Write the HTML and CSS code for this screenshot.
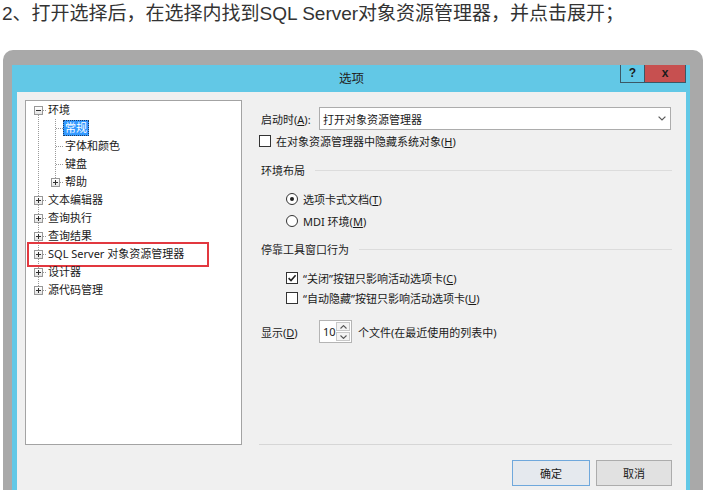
FILE: index.html
```html
<!DOCTYPE html>
<html lang="zh-CN">
<head>
    <meta charset="UTF-8">
    <meta name="viewport" content="width=device-width, initial-scale=1.0">
    <title>选项</title>
    <link rel="stylesheet" href="styles.css">
</head>
<body>

    <p class="step">2、打开选择后，在选择内找到SQL Server对象资源管理器，并点击展开；</p>

    <!-- 截图外框 -->
    <div class="shot">
        <div class="dialog">
            <div class="titlebar">
                <span></span>
                <span class="title">选项</span>
                <div class="caption-buttons">
                    <span class="cap-btn help">?</span>
                    <span class="cap-btn close">x</span>
                </div>
            </div>

            <div class="dialog-body">
                <div class="main">
                    <!-- 左侧树 -->
                    <div class="tree-box">
                        <ul class="tree">
                            <li>
                                <div class="row"><span class="twig"><i class="toggle"></i></span><span class="label">环境</span></div>
                                <ul class="children">
                                    <li><div class="row"><span class="twig"></span><span class="label selected">常规</span></div></li>
                                    <li><div class="row"><span class="twig"></span><span class="label">字体和颜色</span></div></li>
                                    <li><div class="row"><span class="twig"></span><span class="label">键盘</span></div></li>
                                    <li><div class="row"><span class="twig"><i class="toggle plus"></i></span><span class="label">帮助</span></div></li>
                                </ul>
                            </li>
                            <li><div class="row"><span class="twig"><i class="toggle plus"></i></span><span class="label">文本编辑器</span></div></li>
                            <li><div class="row"><span class="twig"><i class="toggle plus"></i></span><span class="label">查询执行</span></div></li>
                            <li><div class="row"><span class="twig"><i class="toggle plus"></i></span><span class="label">查询结果</span></div></li>
                            <li><div class="row marked"><span class="twig"><i class="toggle plus"></i></span><span class="label">SQL Server 对象资源管理器</span></div></li>
                            <li><div class="row"><span class="twig"><i class="toggle plus"></i></span><span class="label">设计器</span></div></li>
                            <li><div class="row"><span class="twig"><i class="toggle plus"></i></span><span class="label">源代码管理</span></div></li>
                        </ul>
                    </div>

                    <!-- 右侧设置页 -->
                    <div class="page">
                        <div class="field startup">
                            <span class="field-label">启动时(<u>A</u>):</span>
                            <div class="combo">
                                <span>打开对象资源管理器</span>
                                <svg width="8" height="5" viewBox="0 0 8 5"><path d="M0.6 0.6 L4 4 L7.4 0.6" fill="none" stroke="#5a5a5a" stroke-width="1.2"/></svg>
                            </div>
                        </div>

                        <label class="check first">
                            <span class="box"></span>在对象资源管理器中隐藏系统对象(<u>H</u>)
                        </label>

                        <div class="group-title g-layout">环境布局</div>
                        <label class="radio indent r1"><span class="dot on"></span>选项卡式文档(<u>T</u>)</label>
                        <label class="radio indent"><span class="dot"></span>MDI 环境(<u>M</u>)</label>

                        <div class="group-title g-dock">停靠工具窗口行为</div>
                        <label class="check indent c1">
                            <span class="box"><svg width="10" height="10" viewBox="0 0 10 10"><path d="M1.6 5.2 L4 7.5 L8.6 2.2" fill="none" stroke="#222" stroke-width="1.6"/></svg></span>“关闭”按钮只影响活动选项卡(<u>C</u>)
                        </label>
                        <label class="check indent">
                            <span class="box"></span>“自动隐藏”按钮只影响活动选项卡(<u>U</u>)
                        </label>

                        <div class="field recent">
                            <span class="field-label">显示(<u>D</u>)</span>
                            <div class="spin">
                                <span class="spin-value">10</span>
                                <div class="spin-arrows">
                                    <span><svg width="7" height="4" viewBox="0 0 7 4"><path d="M0.5 3.5 L3.5 0.6 L6.5 3.5" fill="none" stroke="#555" stroke-width="1.1"/></svg></span>
                                    <span><svg width="7" height="4" viewBox="0 0 7 4"><path d="M0.5 0.5 L3.5 3.4 L6.5 0.5" fill="none" stroke="#555" stroke-width="1.1"/></svg></span>
                                </div>
                            </div>
                            <span class="after">个文件(在最近使用的列表中)</span>
                        </div>
                    </div>
                </div>

                <div class="footer">
                    <button class="btn default">确定</button>
                    <button class="btn cancel">取消</button>
                </div>
            </div>
        </div>
    </div>

</body>
</html>
```

FILE: styles.css
```css
body {
    margin: 0;
    height: 490px;
    overflow: hidden;
    background: #fff;
    font-family: "Liberation Sans", "Noto Sans CJK SC", sans-serif;
}

.step {
    margin: 0;
    padding-left: 2px;
    font-size: 19px;
    line-height: 28px;
    color: #333;
}

/* 截图外框 */
.shot {
    margin: 22px 0 0 3px;
    width: 700px;
    box-sizing: border-box;
    padding: 15px 13px 0 9px;
    background: #a9a9a9;
    border-radius: 10px 10px 0 0;
}

.dialog {
    background: #62c8e6;
    padding: 0 4px 0 5px;
    font-family: "Noto Sans", "Noto Sans CJK SC", sans-serif;
    font-size: 11px;
    color: #1a1a1a;
}

/* 标题栏 */
.titlebar {
    height: 27px;
    display: grid;
    grid-template-columns: 1fr auto 1fr;
    align-items: start;
}
.title {
    font-size: 12.5px;
    line-height: 27px;
    color: #222;
}
.caption-buttons {
    display: flex;
    justify-content: flex-end;
}
.cap-btn {
    height: 18px;
    box-sizing: border-box;
    border: 1px solid #3b5866;
    border-top: none;
    font-family: "Liberation Sans", sans-serif;
    font-weight: bold;
    font-size: 12px;
    line-height: 16px;
    text-align: center;
    color: #1c1c1c;
}
.cap-btn.help {
    width: 25px;
}
.cap-btn.close {
    width: 41px;
    border-left: none;
    background: #c75050;
}

.dialog-body {
    background: #f0f0f0;
    padding: 8px 14px 10px 8px;
}
.main {
    display: flex;
    gap: 17px;
    height: 345px;
}

/* 左侧树 */
.tree-box {
    width: 217px;
    box-sizing: border-box;
    border: 1px solid #a3a3a3;
    background: #fff;
}
.tree,
.tree ul {
    list-style: none;
    margin: 0;
    padding: 0;
    position: relative;
}
.tree::before,
.children::before {
    content: '';
    position: absolute;
    left: 12px;
    top: 9px;
    bottom: 9px;
    border-left: 1px dotted #9a9a9a;
}
.children::before {
    left: 29px;
    top: 0;
}
.children .row {
    padding-left: 17px;
}
.row {
    position: relative;
    display: flex;
    align-items: center;
    height: 18px;
}
.twig {
    position: relative;
    flex: none;
    width: 22px;
    height: 18px;
}
.twig::before {
    content: '';
    position: absolute;
    left: 13px;
    top: 9px;
    width: 7px;
    border-top: 1px dotted #9a9a9a;
}
.toggle {
    position: absolute;
    left: 8px;
    top: 5px;
    width: 9px;
    height: 9px;
    box-sizing: border-box;
    border: 1px solid #989898;
    background: linear-gradient(#fff, #e4e4e4);
    z-index: 1;
}
.toggle::before {
    content: '';
    position: absolute;
    left: 1px;
    top: 3px;
    width: 5px;
    height: 1px;
    background: #303030;
}
.toggle.plus::after {
    content: '';
    position: absolute;
    left: 3px;
    top: 1px;
    width: 1px;
    height: 5px;
    background: #303030;
}
.label {
    margin-left: -2px;
    padding: 0 1px;
    border: 1px solid transparent;
    line-height: 14px;
    white-space: nowrap;
}
.label.selected {
    background: #3399ff;
    border: 1px dotted #1d3c66;
    color: #fff;
}
.row.marked::after {
    content: '';
    position: absolute;
    left: 1px;
    top: -3px;
    width: 182px;
    height: 25px;
    box-sizing: border-box;
    border: 2px solid #e2383f;
}

/* 右侧设置页 */
.page {
    flex: 1;
    display: flex;
    flex-direction: column;
    padding-top: 7px;
    border-bottom: 1px solid #d6d6d6;
}
.field {
    display: flex;
    align-items: center;
}
.field-label {
    width: 58px;
    padding-left: 2px;
}
.startup {
    height: 23px;
}
.combo {
    flex: 1;
    height: 23px;
    margin-right: 1px;
    box-sizing: border-box;
    border: 1px solid #acacac;
    background: #fff;
    display: flex;
    align-items: center;
    justify-content: space-between;
    padding: 0 4px 0 3px;
}

.check,
.radio {
    display: flex;
    align-items: center;
    height: 20px;
}
.indent {
    padding-left: 27px;
}
.check.first {
    margin-top: 1px;
}
.check .box {
    width: 12px;
    height: 12px;
    box-sizing: border-box;
    border: 1px solid #333;
    background: #fff;
    margin-right: 5px;
    display: flex;
    align-items: center;
    justify-content: center;
}
.check.c1 {
    margin-top: 9px;
}
.radio .dot {
    width: 12px;
    height: 12px;
    box-sizing: border-box;
    border: 1px solid #333;
    border-radius: 50%;
    background: #fff;
    margin-right: 5px;
    display: flex;
    align-items: center;
    justify-content: center;
}
.radio .dot.on::before {
    content: '';
    width: 4px;
    height: 4px;
    border-radius: 50%;
    background: #222;
}
.radio.r1 {
    margin-top: 9px;
}
.radio + .radio {
    margin-top: 2px;
}

.group-title {
    display: flex;
    align-items: center;
    height: 20px;
    padding-left: 2px;
}
.group-title::after {
    content: '';
    flex: 1;
    margin-left: 10px;
    border-top: 1px solid #dcdcdc;
}
.g-layout {
    margin-top: 9px;
}
.g-dock {
    margin-top: 8px;
}

.recent {
    margin-top: 12px;
    height: 23px;
}
.spin {
    width: 33px;
    height: 23px;
    box-sizing: border-box;
    border: 1px solid #b4b4b4;
    background: #fff;
    display: flex;
    justify-content: space-between;
    padding: 1px;
}
.spin-value {
    padding-left: 2px;
    line-height: 19px;
}
.spin-arrows {
    display: flex;
    flex-direction: column;
    gap: 1px;
}
.spin-arrows span {
    width: 14px;
    flex: 1;
    box-sizing: border-box;
    border: 1px solid #c8c8c8;
    background: #f4f4f4;
    display: flex;
    align-items: center;
    justify-content: center;
}
.after {
    margin-left: 6px;
}

/* 底部按钮 */
.footer {
    display: flex;
    justify-content: flex-end;
    gap: 6px;
    padding-top: 15px;
}
.btn {
    height: 26px;
    border: 1px solid #acacac;
    background: #e1e1e1;
    font-family: "Noto Sans", "Noto Sans CJK SC", sans-serif;
    font-size: 11px;
    color: #1a1a1a;
    padding: 0;
}
.btn.default {
    width: 78px;
    border-color: #6fa8dc;
    background: #e5e9ee;
}
.btn.cancel {
    width: 76px;
}
```
